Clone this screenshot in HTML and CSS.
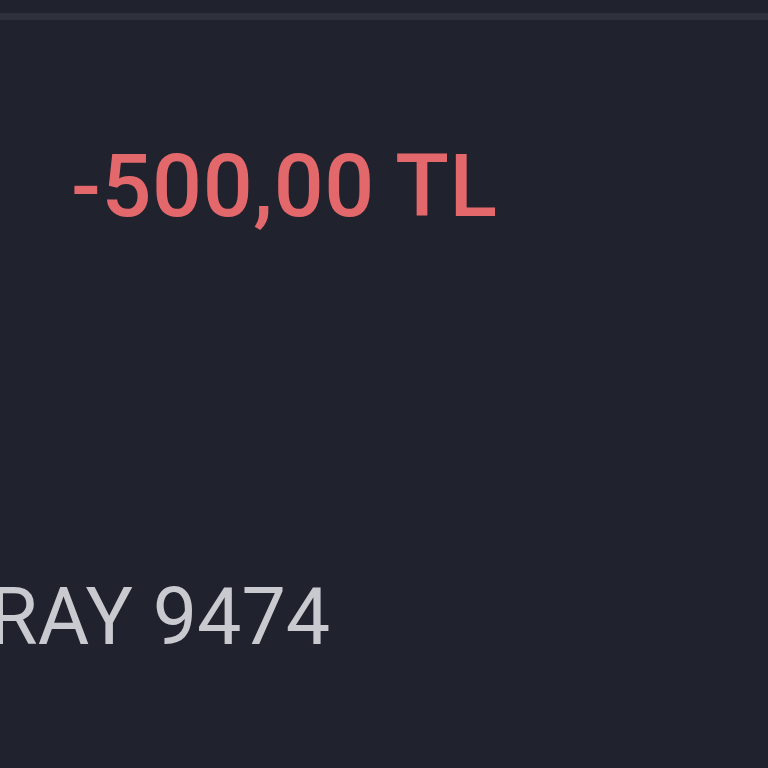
FILE: index.html
```html
<!DOCTYPE html>
<html lang="tr">
<head>
<meta charset="utf-8">
<title>İşlem</title>
<link rel="stylesheet" href="styles.css">
</head>
<body>
<div class="screen">
  <div class="divider"></div>
  <div class="amount">-500,00 TL</div>
  <div class="card-row">
    <span class="card-name">RAY 9474</span>
  </div>
</div>
</body>
</html>
```
FILE: styles.css
```css
html, body {
  margin: 0;
  padding: 0;
  background: #20222d;
}

.screen {
  width: 768px;
  height: 768px;
  overflow: hidden;
  display: flex;
  flex-direction: column;
  background: #20222d;
  font-family: Roboto, "Liberation Sans", sans-serif;
}

.divider {
  margin-top: 13px;
  height: 7px;
  background: #2e303c;
}

.amount {
  margin-top: 111px;
  padding-left: 71px;
  font-size: 88px;
  font-weight: 500;
  letter-spacing: 0.6px;
  line-height: 110px;
  color: #e3686c;
}

.card-row {
  margin-top: 326px;
  overflow: hidden;
}

.card-name {
  display: block;
  margin-left: -11px;
  font-size: 79px;
  line-height: 100px;
  color: #c9cad0;
}
```
